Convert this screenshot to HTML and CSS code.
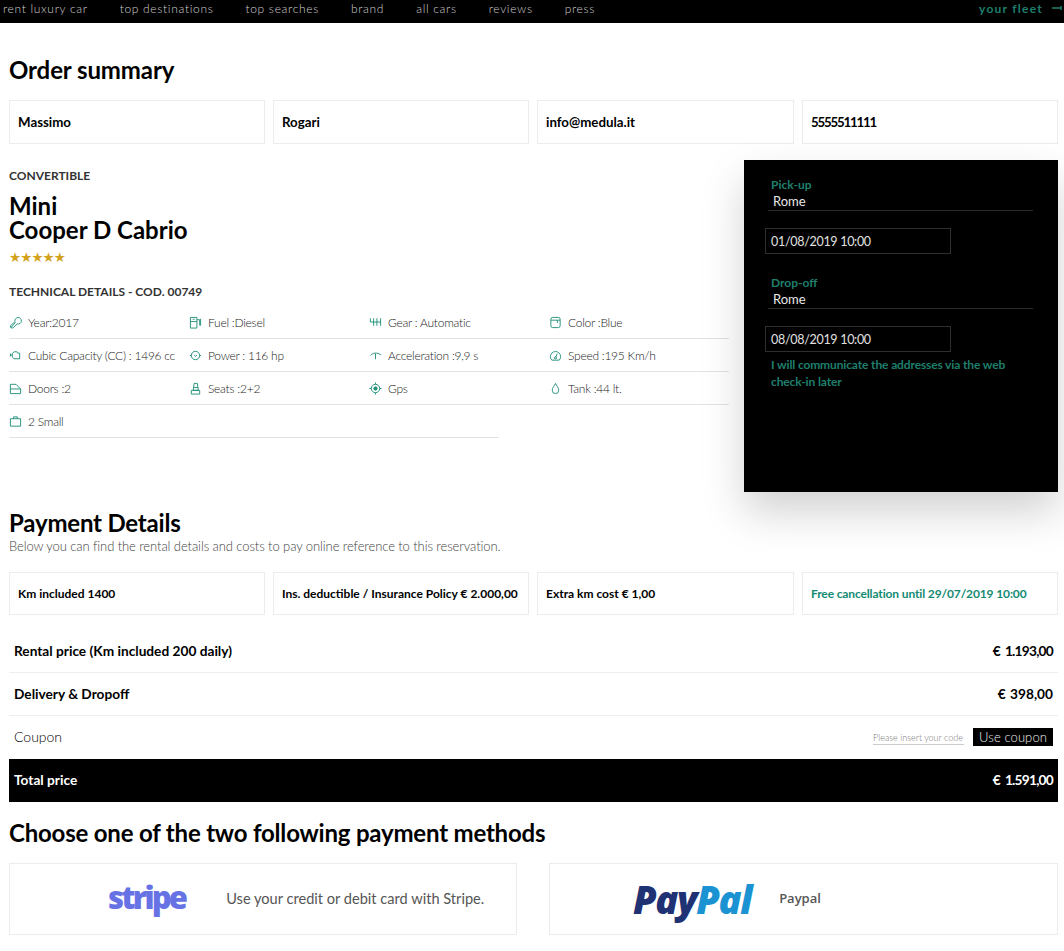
FILE: index.html
```html
<!DOCTYPE html>
<html lang="en">
<head>
<meta charset="utf-8">
<title>Order summary</title>
<link rel="stylesheet" href="styles.css">
</head>
<body>
<nav class="nav">
  <div class="nav-links">
    <a>rent luxury car</a><a>top destinations</a><a>top searches</a><a>brand</a><a>all cars</a><a>reviews</a><a>press</a>
  </div>
  <a class="fleet">your fleet <svg class="fleet-arrow" width="10" height="6" viewBox="0 0 10 6"><path d="M0 3h9M9 1v4" fill="none" stroke="#1f7f6c" stroke-width="1.4"/></svg></a>
</nav>
<main class="page">
  <h1 class="title">Order summary</h1>
  <div class="boxes">
    <div class="box">Massimo</div>
    <div class="box">Rogari</div>
    <div class="box">info@medula.it</div>
    <div class="box box-num">5555511111</div>
  </div>
  <section class="car">
    <div class="car-info">
      <div class="category">CONVERTIBLE</div>
      <h2 class="car-name">Mini<br>Cooper D Cabrio</h2>
      <div class="stars">★★★★★</div>
      <div class="tech-title">TECHNICAL DETAILS - COD. 00749</div>
      <div class="specs">
        <div class="spec"><svg class="ico" viewBox="0 0 14 14"><path d="M2 12.500l5-5.500M2 12.500l-.5-2 5-4.500a3.500 3.500 0 1 1 2.500 2.500l-5 4.500z"/></svg>Year:2017</div>
        <div class="spec"><svg class="ico" viewBox="0 0 14 14"><path d="M1.500 13V1.500h7V13zM1.500 6h7M8.500 4h3v6h1V3"/><path d="M4 3.500h2"/></svg>Fuel :Diesel</div>
        <div class="spec"><svg class="ico" viewBox="0 0 14 14"><path d="M1.500 2.500v4h11M5 2.500v8M8.500 2.500v8M12.500 2.500v8"/></svg>Gear : Automatic</div>
        <div class="spec"><svg class="ico" viewBox="0 0 14 14"><rect x="2" y="1.500" width="10" height="11" rx="2"/><path d="M2 4.500h10M9 4.500v3"/></svg>Color :Blue</div>
        <div class="spec"><svg class="ico" viewBox="0 0 14 14"><path d="M1.500 5v3M1.500 6.500h2M3.500 5l2-2h3l1 1.500h2v6h-6l-2-2z"/></svg>Cubic Capacity (CC) : 1496 cc</div>
        <div class="spec"><svg class="ico" viewBox="0 0 14 14"><circle cx="7" cy="7" r="4.500"/><path d="M1 7h1.500M11.500 7H13M5.500 6.500l1.500 1.500 1.500-1.500"/></svg>Power : 116 hp</div>
        <div class="spec"><svg class="ico" viewBox="0 0 14 14"><path d="M1.500 7c2-3 8-3.500 10.500-1M7 5v6"/><path d="M12.500 5.500v1"/></svg>Acceleration :9,9 s</div>
        <div class="spec"><svg class="ico" viewBox="0 0 14 14"><path d="M3 12a5.500 5.500 0 1 1 8 0zM7 9l2-4"/><circle cx="7" cy="9.500" r="1.200"/></svg>Speed :195 Km/h</div>
        <div class="spec"><svg class="ico" viewBox="0 0 14 14"><path d="M1.500 12.500V2.500h6l5 5v5zM1.500 7.500h11"/></svg>Doors :2</div>
        <div class="spec"><svg class="ico" viewBox="0 0 14 14"><path d="M4.500 9l1-7.500h3.500l1 7.500zM2.500 9h9v4h-9zM5 6h5"/></svg>Seats :2+2</div>
        <div class="spec"><svg class="ico" viewBox="0 0 14 14"><circle cx="7" cy="7" r="4.500"/><circle class="solid" cx="7" cy="7" r="1.800"/><path d="M7 .5v2M7 11.500v2M.5 7h2M11.500 7h2"/></svg>Gps</div>
        <div class="spec"><svg class="ico" viewBox="0 0 14 14"><path d="M7 1.500c-1 2.500-3.500 4.500-3.500 7.500a3.500 3.500 0 0 0 7 0c0-3-2.500-5-3.500-7.500z"/></svg>Tank :44 lt.</div>
        <div class="spec spec-wide"><svg class="ico" viewBox="0 0 14 14"><path d="M1.500 4h11v8h-11zM5 4V2h4v2"/></svg>2 Small</div>
      </div>
    </div>
    <aside class="panel">
      <div class="place-label">Pick-up</div>
      <div class="place">Rome</div>
      <div class="date">01/08/2019 10:00</div>
      <div class="place-label label-second">Drop-off</div>
      <div class="place">Rome</div>
      <div class="date">08/08/2019 10:00</div>
      <p class="note">I will communicate the addresses via the web check-in later</p>
    </aside>
  </section>
  <h2 class="title title-payment">Payment Details</h2>
  <p class="sub">Below you can find the rental details and costs to pay online reference to this reservation.</p>
  <div class="boxes boxes-small">
    <div class="box">Km included 1400</div>
    <div class="box">Ins. deductible / Insurance Policy € 2.000,00</div>
    <div class="box">Extra km cost € 1,00</div>
    <div class="box box-green">Free cancellation until 29/07/2019 10:00</div>
  </div>
  <div class="price-table">
    <div class="price-row"><span>Rental price (Km included 200 daily)</span><span class="amount">€ 1.193,00</span></div>
    <div class="price-row"><span>Delivery &amp; Dropoff</span><span class="amount amount-wide">€ 398,00</span></div>
    <div class="price-row coupon-row"><span class="coupon-label">Coupon</span>
      <div class="coupon"><span class="coupon-input">Please insert your code</span><span class="coupon-btn">Use coupon</span></div>
    </div>
    <div class="price-row total-row"><span>Total price</span><span class="amount">€ 1.591,00</span></div>
  </div>
  <h2 class="title title-choose">Choose one of the two following payment methods</h2>
  <div class="methods">
    <div class="method"><span class="logo-stripe">stripe</span><span class="method-text">Use your credit or debit card with Stripe.</span></div>
    <div class="method"><span class="logo-paypal"><span class="pay">Pay</span><span class="pal">Pal</span></span><span class="method-text paypal-text">Paypal</span></div>
  </div>
</main>
</body>
</html>
```
FILE: styles.css
```css
* { box-sizing: border-box; }
html, body { margin: 0; padding: 0; background: #fff; }
body { font-family: "Lato", "Liberation Sans", sans-serif; color: #000; height: 951px; overflow: hidden; }

.nav { height: 23px; background: #000; display: flex; justify-content: space-between; padding: 0 2px 0 3px; font-weight: 300; }
.nav-links { display: flex; gap: 32px; color: #d0d0d0; font-size: 12px; letter-spacing: .68px; line-height: 17px; }
.fleet { color: #1f7f6c; font-size: 12px; font-weight: 700; letter-spacing: 1.25px; line-height: 17px; display: flex; gap: 9px; align-items: flex-start; }
.fleet-arrow { margin-top: 5px; }

.page { padding: 0 6px 0 9px; }
.title { margin: 0; font-size: 24px; font-weight: 700; line-height: 30px; letter-spacing: -.2px; }
h1.title { padding-top: 32px; letter-spacing: -.1px; }

.boxes { display: grid; grid-template-columns: 256px 256px 257px 256px; gap: 8px; margin-top: 15px; }
.box { height: 44px; border: 1px solid #ececec; padding: 0 8px; font-size: 13.3px; font-weight: 700; line-height: 42px; white-space: nowrap; overflow: hidden; }
.box-num { letter-spacing: -1.2px; }
.box-green { color: #138a72; letter-spacing: -.13px; }

.car { display: flex; justify-content: space-between; margin-top: 16px; height: 332px; }
.car-info { width: 720px; padding-top: 8px; }
.category { font-size: 12px; font-weight: 700; line-height: 15px; color: #333; }
.car-name { margin: 11px 0 0; font-size: 24px; font-weight: 700; line-height: 24px; }
.stars { margin-top: 6px; font-family: "DejaVu Sans", sans-serif; color: #d2a21c; font-size: 13.5px; line-height: 18px; letter-spacing: -.9px; height: 18px; }
.tech-title { margin-top: 18px; font-size: 12px; font-weight: 700; line-height: 15px; color: #333; }

.specs { display: grid; grid-template-columns: repeat(4, 180px); margin-top: 7px; }
.spec { height: 33px; padding-top: 1px; border-bottom: 1px solid #e2e2e2; display: flex; align-items: center; font-size: 12px; font-weight: 300; letter-spacing: -.25px; color: #222; white-space: nowrap; }
.spec-wide { grid-column: 1 / span 3; width: 490px; }
.ico { width: 13px; height: 13px; margin-right: 6px; flex: none; fill: none; stroke: #1f9079; stroke-width: 1; }
.ico .solid { fill: #1f9079; }

.panel { width: 314px; background: #000; padding: 18px 25px 0 21px; box-shadow: 0 20px 40px rgba(0,0,0,.18); }
.place-label { padding-left: 6px; font-size: 12px; font-weight: 700; line-height: 14px; color: #1f7f6c; }
.label-second { margin-top: 22px; }
.place { margin-left: 3px; padding: 1px 0 0 5px; width: 265px; height: 19px; font-size: 13px; font-weight: 400; line-height: 16px; color: #e8e8e8; border-bottom: 1px solid #2b2b2b; }
.date { margin-top: 17px; width: 186px; height: 26px; border: 1px solid #2f2f2f; padding-left: 5px; font-size: 12.5px; font-weight: 400; line-height: 25px; color: #e0e0e0; letter-spacing: -.3px; }
.note { margin: 4px 20px 0 0; padding-left: 6px; font-size: 12px; font-weight: 700; line-height: 17px; letter-spacing: -.13px; color: #1f7f6c; }

.title-payment { margin-top: 16px; line-height: 30px; }
.sub { margin: 0; font-size: 13px; font-weight: 300; line-height: 16px; letter-spacing: -.09px; color: #444; }
.boxes-small { margin-top: 18px; }
.boxes-small .box { height: 43px; font-size: 12px; }

.price-table { margin-top: 16px; }
.price-row { display: flex; justify-content: space-between; align-items: center; height: 43px; padding: 0 5px 2px; font-size: 13.7px; font-weight: 700; border-bottom: 1px solid #eee; }
.price-row:first-child { height: 42px; }
.amount { letter-spacing: -.75px; word-spacing: 2.5px; }
.amount-wide { letter-spacing: 0; word-spacing: 1px; }
.coupon-row { border-bottom: 0; font-weight: 400; }
.coupon-label { font-weight: 300; font-size: 14px; }
.coupon { display: flex; align-items: center; gap: 9px; }
.coupon-input { font-size: 9px; font-weight: 300; color: #777; border-bottom: 1px solid #ccc; line-height: 13px; width: 91px; padding-top: 1px; white-space: nowrap; margin-top: 2px; }
.coupon-btn { background: #000; color: #eee; font-size: 13px; font-weight: 300; line-height: 18px; padding: 0 6px; letter-spacing: .1px; }
.total-row { background: #000; color: #fff; border-bottom: 0; }

.title-choose { margin-top: 16px; }
.methods { display: grid; grid-template-columns: 508px 509px; justify-content: space-between; margin-top: 15px; }
.method { height: 72px; border: 1px solid #ececec; display: flex; align-items: center; }
.logo-stripe { margin: 0 0 4px 98px; font-family: "Open Sans", sans-serif; font-size: 31px; font-weight: 800; color: #6772e5; letter-spacing: -2.8px; }
.method-text { margin: 0 0 2px 41px; font-size: 14.6px; color: #555; }
.logo-paypal { margin-left: 83px; font-family: "Open Sans", sans-serif; font-size: 38px; font-weight: 800; font-style: italic; letter-spacing: -1.4px; }
.pay { color: #1f3273; }
.pal { color: #1b93d3; }
.paypal-text { margin-left: 28px; font-family: "Open Sans", sans-serif; font-size: 13px; font-weight: 600; }
```
